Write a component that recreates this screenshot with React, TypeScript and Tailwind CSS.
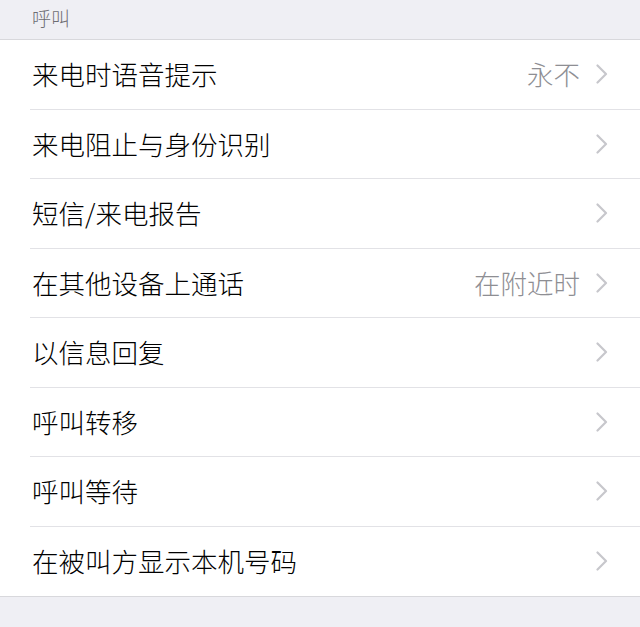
import React from 'react';

interface RowItem {
  label: string;
  value?: string;
}

const ROWS: RowItem[] = [
  { label: '来电时语音提示', value: '永不' },
  { label: '来电阻止与身份识别' },
  { label: '短信/来电报告' },
  { label: '在其他设备上通话', value: '在附近时' },
  { label: '以信息回复' },
  { label: '呼叫转移' },
  { label: '呼叫等待' },
  { label: '在被叫方显示本机号码' },
];

const Chevron: React.FC = () => (
  <svg width="12" height="20" viewBox="0 0 12 20" fill="none" className="shrink-0">
    <path d="M1.5 1.5 L10 10 L1.5 18.5" stroke="#c7c7cc" strokeWidth="2.2" strokeLinecap="round" strokeLinejoin="round" />
  </svg>
);

const App: React.FC = () => {
  return (
    <div
      className="w-[640px] h-[627px] bg-[#efeff4] overflow-hidden font-light"
      style={{ fontFamily: '"Noto Sans CJK SC", "Noto Sans", sans-serif' }}
    >
      {/* section header */}
      <div className="h-[39px] flex items-center pl-[32px] text-[19px] text-[#6d6d72] leading-none pb-[4px]">
        呼叫
      </div>

      <div className="bg-white border-t border-b border-[#d8d8dc]">
        {ROWS.map((row, i) => (
          <div key={row.label} className="pl-[30px]">
            <div
              className={`h-[69.5px] flex items-center pr-[32px] ${
                i < ROWS.length - 1 ? 'border-b border-[#e2e2e6]' : ''
              }`}
            >
              <span className="pl-[2px] text-[26.5px] text-black leading-none flex-1">{row.label}</span>
              {row.value && (
                <span className="text-[26.5px] text-[#8e8e93] leading-none mr-[16px]">{row.value}</span>
              )}
              <Chevron />
            </div>
          </div>
        ))}
      </div>
    </div>
  );
};

export default App;
